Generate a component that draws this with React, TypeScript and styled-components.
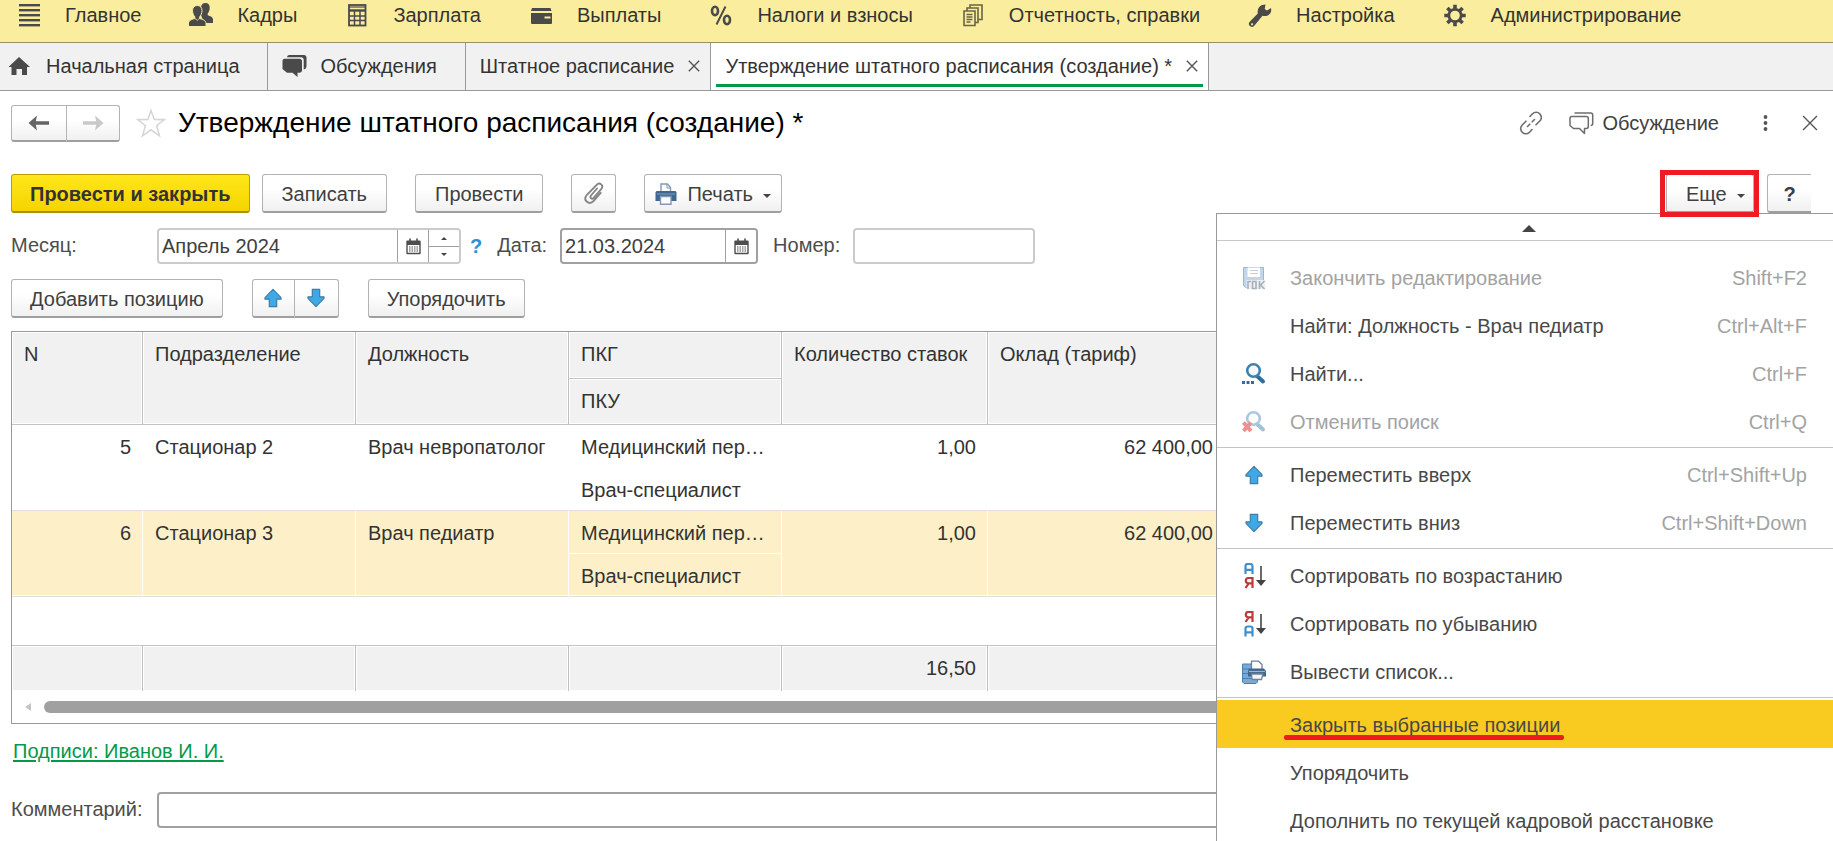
import React from "react";
import styled, { createGlobalStyle, css } from "styled-components";

const GlobalStyle = createGlobalStyle`
  *, *::before, *::after { box-sizing: border-box; }
  body { margin: 0; background: #fff; }
  body, button, input { font: 20px/24px "Liberation Sans", Arial, sans-serif; color: #404040; }
  button { cursor: pointer; margin: 0; }
  svg { display: block; flex: none; }
`;

const Shell = styled.div`
  min-height: 100vh;
  overflow: hidden;
  position: relative;
`;

/* ---------- sections bar ---------- */

const Sections = styled.nav`
  display: flex;
  align-items: center;
  gap: 48px;
  height: 43px;
  padding: 0 17px 13px;
  background: #fbed9e;
  border-bottom: 1px solid #9a8f62;
`;

const SectionLink = styled.a`
  display: flex;
  align-items: center;
  gap: 24px;
  color: #333;
  text-decoration: none;
  white-space: nowrap;
`;

/* ---------- open pages ---------- */

const Tabs = styled.div`
  display: flex;
  height: 48px;
  background: #f1f1f1;
  border-bottom: 1px solid #999;
`;

const Tab = styled.div<{ $active?: boolean }>`
  position: relative;
  display: flex;
  align-items: center;
  gap: 14px;
  padding: 0 10px 2px 14px;
  border-right: 1px solid #999;
  background: ${(p) => (p.$active ? "#fff" : "transparent")};
  ${(p) =>
    p.$active &&
    css`
      &::after {
        content: "";
        position: absolute;
        left: 5px;
        right: 5px;
        bottom: 3px;
        height: 3px;
        background: #009a4a;
      }
    `}
`;

const HomeTab = styled(Tab)`
  gap: 15px;
  padding: 0 27px 2px 7px;
`;

const TalkTab = styled(Tab)`
  padding-right: 28px;
`;

const BareButton = styled.button`
  display: flex;
  align-items: center;
  gap: 8px;
  padding: 0;
  border: 0;
  background: none;
  white-space: nowrap;
`;

const TabButton = styled(BareButton)`
  gap: inherit;
  color: #333;
`;

/* ---------- document header ---------- */

const Main = styled.main`
  padding: 0 22px 0 11px;
`;

const TitleRow = styled.header`
  display: flex;
  align-items: center;
  height: 64px;
  margin-bottom: 19px;
`;

const Title = styled.h1`
  flex: 1;
  margin: 0 0 0 12px;
  font-size: 28px;
  line-height: 32px;
  font-weight: 400;
  color: #000;
`;

const TitleTools = styled.div`
  display: flex;
  align-items: center;
  gap: 26px;
  margin-right: -7px;
`;

const WindowTools = styled.div`
  display: flex;
  align-items: center;
  gap: 34px;
  margin-left: 18px;
`;

/* ---------- buttons ---------- */

const Button = styled.button<{ $primary?: boolean; $snug?: boolean }>`
  display: flex;
  align-items: center;
  justify-content: center;
  gap: 10px;
  height: 39px;
  padding: 2px ${(p) => (p.$primary || p.$snug ? "18px" : "19px")} 0;
  border: 1px solid #b3b3b3;
  border-bottom: 2px solid #9f9f9f;
  border-radius: 3px;
  background: linear-gradient(#fff 40%, #f0f0f0);
  white-space: nowrap;
  ${(p) =>
    p.$primary &&
    css`
      border-color: #b8a000 #b8a000 #a89200;
      background: linear-gradient(#ffe61a, #f5d400);
      font-weight: 700;
      color: #333;
    `}
`;

const IconButton = styled(Button)`
  width: 45px;
  padding: 0;
`;

const HelpButton = styled(Button)`
  width: 44px;
  padding: 2px 0 0;
  border-right: 0;
  border-radius: 3px 0 0 3px;
  font-weight: 700;
`;

const Pair = styled.div<{ $nav?: boolean }>`
  display: flex;
  ${Button} {
    width: ${(p) => (p.$nav ? "53px" : "44px")};
    height: ${(p) => (p.$nav ? "37px" : "39px")};
    padding: 0;
  }
  ${Button}:first-child {
    width: ${(p) => (p.$nav ? "56px" : "43px")};
    border-radius: 3px 0 0 3px;
  }
  ${Button}:last-child {
    border-left: 0;
    border-radius: 0 3px 3px 0;
  }
`;

const StarButton = styled(BareButton)`
  margin-left: 16px;
`;

const Toolbar = styled.div`
  position: relative;
  display: flex;
  gap: 28px;
`;

const Group = styled.div`
  display: flex;
  gap: 12px;
`;

const EndGroup = styled(Group)`
  gap: 13px;
  margin-left: auto;
`;

const PrintButton = styled(Button)`
  padding: 2px 10px 0;
`;

const Caret = styled.span`
  padding-top: 3px;
`;

const MoreButton = styled(Button)`
  width: 88px;
  padding: 2px 10px 0 19px;
  justify-content: space-between;
`;

const Highlighted = styled.div`
  position: relative;
  z-index: 3;
  &::after {
    content: "";
    position: absolute;
    inset: -4px -5px -4px -6px;
    border: 5px solid #ed1c24;
    pointer-events: none;
  }
`;

/* ---------- form fields ---------- */

const Fields = styled.div`
  display: flex;
  align-items: center;
  margin: 15px 0;
`;

const Label = styled.label<{ $lead?: boolean }>`
  width: ${(p) => (p.$lead ? "146px" : "auto")};
  margin-right: ${(p) => (p.$lead ? "0" : "13px")};
  padding-bottom: 2px;
  flex: none;
  color: #4d4d4d;
`;

const Field = styled.div<{ $strong?: boolean; $grow?: boolean }>`
  display: flex;
  height: 36px;
  flex: ${(p) => (p.$grow ? "1" : "none")};
  border: 2px solid ${(p) => (p.$strong ? "#a0a0a0" : "#cbcbcb")};
  border-radius: 4px;
  background: #fff;
  overflow: hidden;
`;

const TextInput = styled.input<{ $w?: number }>`
  width: ${(p) => (p.$w ? p.$w + "px" : "100%")};
  min-width: 0;
  padding: 0 3px 1px;
  border: 0;
  outline: 0;
  background: transparent;
`;

const FieldButton = styled.button`
  display: flex;
  align-items: center;
  justify-content: center;
  width: 31px;
  padding: 0;
  border: 0;
  border-left: 1px solid #a0a0a0;
  background: #fff;
`;

const Spinner = styled.div`
  display: grid;
  grid-template-rows: 1fr 1fr;
  ${FieldButton} + ${FieldButton} {
    border-top: 1px solid #a0a0a0;
  }
`;

const Hint = styled(BareButton)`
  margin: 0 15px 0 9px;
  font-weight: 700;
  color: #2f8fd6;
`;

const NumberLabel = styled(Label)`
  margin-left: 15px;
`;

const Commands = styled.div`
  display: flex;
  gap: 29px;
  margin-bottom: 13px;
`;

/* ---------- positions table ---------- */

const Grid = styled.div`
  border: 1px solid #999;
  background: #fff;
`;

const Table = styled.table`
  width: 100%;
  table-layout: fixed;
  border-collapse: separate;
  border-spacing: 0;
  color: #333;
`;

const Row = styled.tr<{ $h: number }>`
  height: ${(p) => p.$h}px;
`;

const Th = styled.th`
  padding: 10px 11px 0 12px;
  border-right: 1px solid #bfbfbf;
  border-bottom: 1px solid #c4c4c4;
  background: #f1f1f1;
  box-shadow: inset 0 0 0 1px #fff;
  font-weight: 400;
  text-align: left;
  vertical-align: top;
  white-space: nowrap;
`;

const Td = styled.td<{ $num?: boolean; $on?: boolean; $last?: boolean }>`
  padding: 10px 11px 0 12px;
  vertical-align: top;
  white-space: nowrap;
  text-align: ${(p) => (p.$num ? "right" : "left")};
  border-right: 1px solid #fff;
  border-bottom: 1px solid ${(p) => (p.$last ? "#dedede" : "#fff")};
  background: ${(p) => (p.$on ? "#fdf0c8" : "#fff")};
  box-shadow: ${(p) => (p.$on && p.$last ? "inset 0 -1px 0 #fff" : "none")};
`;

const TotalCell = styled.td`
  padding: 10px 11px 0;
  border-right: 1px solid #bfbfbf;
  border-top: 1px solid #c4c4c4;
  background: #f1f1f1;
  box-shadow: inset 0 0 0 1px #fff;
  text-align: right;
  vertical-align: top;
`;

const ScrollRow = styled.div`
  display: flex;
  align-items: center;
  gap: 13px;
  height: 32px;
  padding: 0 13px;
`;

const ScrollThumb = styled.div`
  flex: 1;
  height: 12px;
  border-radius: 6px;
  background: #a0a0a0;
`;

const Signatures = styled.a`
  display: inline-block;
  margin: 15px 2px 29px;
  color: #009a4a;
  text-decoration-thickness: 2px;
  text-underline-offset: 2px;
`;

const CommentRow = styled.div`
  display: flex;
  align-items: center;
`;

/* ---------- drop-down menu ---------- */

const Menu = styled.div`
  position: absolute;
  z-index: 2;
  top: 100%;
  right: -22px;
  width: 617px;
  padding-bottom: 40px;
  border: 1px solid #999;
  border-right: 0;
  background: #fff;
`;

const MenuScroll = styled.button`
  display: flex;
  align-items: center;
  justify-content: center;
  width: 100%;
  height: 27px;
  margin-bottom: 12px;
  padding: 3px 0 0 8px;
  border: 0;
  border-bottom: 1px solid #c8c8c8;
  background: #fff;
`;

const MenuItem = styled.button<{ $on?: boolean }>`
  display: flex;
  align-items: center;
  width: 100%;
  height: 48px;
  padding: 1px 26px 0 25px;
  border: 0;
  background: ${(p) => (p.$on ? "#f9cb20" : "#fff")};
  color: #484848;
  text-align: left;
  &:disabled { color: #a3a3a3; }
`;

const MenuIcon = styled.span`
  display: flex;
  justify-content: center;
  flex: none;
  width: 24px;
  margin-right: 24px;
`;

const MenuText = styled.span<{ $marked?: boolean }>`
  position: relative;
  ${(p) =>
    p.$marked &&
    css`
      &::after {
        content: "";
        position: absolute;
        left: -6px;
        right: -4px;
        bottom: -3px;
        height: 5px;
        border-radius: 2px;
        background: #ed1c24;
      }
    `}
`;

const Shortcut = styled.kbd`
  margin-left: auto;
  font-family: inherit;
  color: #a3a3a3;
`;

const Separator = styled.hr`
  height: 1px;
  margin: 2px 0;
  border: 0;
  background: #c4c4c4;
`;

/* ---------- icons ---------- */

const G = "#4a4a4a";

const BarsIcon = () => (
  <svg width="24" height="24" viewBox="0 0 24 24" fill={G}>
    {[1, 6, 11, 16, 21].map((y) => <rect key={y} x="2" y={y} width="21" height="2.4" />)}
  </svg>
);
const PeopleIcon = () => (
  <svg width="24" height="24" viewBox="0 0 24 24" fill={G}>
    <path d="M16.500 0c2.800 0 4.200 2 4.200 4.600 0 2.800-.9 4.800-2 6v1.600c2.500.8 5.300 1.600 5.300 4.300V20h-9L12 12V4.600C12 2 13.700 0 16.500 0z" />
    <g stroke="#fbed9e" strokeWidth="1">
      <path d="M8.300 2.500c3 0 4.700 2.200 4.700 5 0 3-1.200 5-2.300 6.300v1.700c3.300.9 6.300 2 6.300 5v3H-.5v-3c0-3 3-4.100 6.300-5v-1.700C4.700 12.500 3.500 10.500 3.500 7.500c0-2.800 1.800-5 4.800-5z" />
    </g>
    <path d="M5.800 15.300l2.500 2 2.400-2" fill="none" stroke="#fbed9e" strokeWidth=".8" />
  </svg>
);
const CalcIcon = () => (
  <svg width="24" height="24" viewBox="0 0 24 24" fill="none" stroke={G}>
    <rect x="4" y="2" width="16.500" height="20.500" strokeWidth="1.800" />
    <path d="M4 4h16.500" strokeWidth="1.200" />
    <path d="M4 7.500h16" strokeWidth="2.400" />
    <path d="M4 13h16M4 17.500h16M9.500 8v14M15 8v14" strokeWidth="1.500" />
  </svg>
);
const WalletIcon = () => (
  <svg width="24" height="24" viewBox="0 0 24 24" fill={G}>
    <path d="M3 5h18.500l1 3H2z" />
    <path d="M2 10h21v10a1 1 0 0 1-1 1H3a1 1 0 0 1-1-1zM15.500 13.500v2h6v-2z" fillRule="evenodd" />
  </svg>
);
const PercentIcon = () => (
  <svg width="24" height="24" viewBox="0 0 24 24" fill="none" stroke={G}>
    <ellipse cx="6" cy="8" rx="3" ry="4.200" strokeWidth="2.600" />
    <ellipse cx="18" cy="17" rx="3" ry="4.200" strokeWidth="2.600" />
    <path d="M16.500 3.500L7.500 21.500" strokeWidth="2" />
  </svg>
);
const DocsIcon = () => (
  <svg width="24" height="24" viewBox="0 0 24 24" fill="none" stroke="#6a6446" strokeWidth="1.600">
    <path d="M3 8h11v14.500H3zM6 7.500V5h11v14.500h-2.500M9 4.500V2h12v14.500h-3.500" />
    <path d="M5.500 11.500h6M5.500 14h6M5.500 16.500h6M5.500 19h4" />
  </svg>
);
const WrenchIcon = () => (
  <svg width="24" height="24" viewBox="0 0 24 24">
    <path fill={G} fillRule="evenodd" d="M17.500 1.500l-.8 4.500 2.300 1.500L23 5c1 3.500-1 7.500-5 8-1.500.2-2.700 0-3.500-.2L6.500 22.500a3 3 0 0 1-5-3.500l8.300-8.500C9 6 11.500 1.500 17.500 1.500zM4 20.200a1 1 0 1 0 .1 0z" />
  </svg>
);
const GearIcon = () => (
  <svg width="24" height="24" viewBox="0 0 24 24" fill="none" stroke={G}>
    <circle cx="12" cy="12.500" r="6.200" strokeWidth="2.800" />
    <path strokeWidth="3.600" d="M12 1.800v4M12 19.200v4M1.300 12.500h4M18.700 12.500h4M4.400 4.900l2.800 2.800M16.800 17.300l2.800 2.800M4.400 20.100l2.800-2.800M16.800 7.700l2.800-2.800" />
  </svg>
);
const HomeIcon = () => (
  <svg width="24" height="20" viewBox="0 0 24 20">
    <path fill={G} d="M12 1L23 11h-3v8h-5v-6H9.500v6h-5v-8h-3z" />
  </svg>
);
const TalkIcon = () => (
  <svg width="25" height="24" viewBox="0 0 25 24" fill={G}>
    <path d="M5 3.300C5 2 6 1 7.300 1H22c1.500 0 2.500 1 2.500 2.500V12c0 2-1 3.200-2.800 3.500V6c0-1.700-1-2.700-2.700-2.700z" />
    <path d="M2.500 4.800h15c1.600 0 2.500.9 2.500 2.500v9c0 1.500-.9 2.400-2.500 2.400h-2V23l-5-4.300H5L.5 15V7.300C.5 5.700 1.200 4.800 2.500 4.800z" />
  </svg>
);
const TalkOutlineIcon = () => (
  <svg width="25" height="24" viewBox="0 0 25 24" fill="none" stroke="#6d6d6d" strokeWidth="1.500" strokeLinejoin="round">
    <path d="M5.500 2h16.200c1.300 0 2 .7 2 2v8.500c0 1.300-.7 2-2 2" />
    <path d="M2.800 5.500h14.600c1.200 0 1.900.7 1.900 1.900v8.200c0 1.200-.7 1.900-1.900 1.900H15.500v5l-5-5H4.500L1 14.500V7.400c0-1.200.6-1.900 1.800-1.900z" />
  </svg>
);
const CloseIcon = ({ size = 12 }: { size?: number }) => (
  <svg width={size} height={size} viewBox="0 0 12 12" stroke="#555" strokeWidth={size > 12 ? 1 : 1.4}>
    <path d="M.8.8l10.400 10.400M11.200.8L.8 11.200" />
  </svg>
);
const NavArrow = ({ forward }: { forward?: boolean }) => (
  <svg width="22" height="16" viewBox="0 0 22 16">
    <path
      fill={forward ? "#c9c9c9" : "#666"}
      d={forward ? "M21.500 8l-8.500 7.500 1.200-5.700H1V6.200h13.200L13 .5z" : "M.5 8L9 .5 7.800 6.200H21v3.600H7.800L9 15.500z"}
    />
  </svg>
);
const StarIcon = () => (
  <svg width="30" height="30" viewBox="0 0 31 30" fill="#fff" stroke="#d6d6d6" strokeWidth="1.600">
    <path d="M15.500 2l3.300 9.300 10.500.2-8 6.300 3 10.500-8.800-6.300-8.800 6.300 3-10.500-8-6.300 10.500-.2z" />
  </svg>
);
const LinkIcon = () => (
  <svg width="24" height="24" viewBox="0 0 24 24" fill="none" stroke="#6d6d6d" strokeWidth="1.600" strokeLinecap="round">
    <path d="M11 5.500l2.500-2.700a5 5 0 0 1 7.300 0 5 5 0 0 1 0 7.200L17 13.800M13 18.500l-2.500 2.700a5 5 0 0 1-7.300 0 5 5 0 0 1 0-7.200L7 10.200M8.500 15.500l2.300-2.300M13.200 10.800l2.300-2.300" />
  </svg>
);
const DotsIcon = () => (
  <svg width="5" height="18" viewBox="0 0 5 18" fill="#555">
    <circle cx="2.500" cy="3" r="1.900" /><circle cx="2.500" cy="9" r="1.900" /><circle cx="2.500" cy="15" r="1.900" />
  </svg>
);
const ClipIcon = () => (
  <svg width="22" height="24" viewBox="0 0 22 24" fill="none" stroke="#858585" strokeWidth="1.900" strokeLinecap="round">
    <path d="M14 7.500l-6 7c-1.700 2.300.9 4.300 2.700 2.300l7.500-8.600c3-3.900-1.500-7.600-4.800-4L3.700 14c-4.200 5.600 2.600 10.600 7 5.900l7-8" />
  </svg>
);
const PrinterIcon = () => (
  <svg width="22" height="22" viewBox="0 0 22 22">
    <path d="M6 8V1h6.500L15.500 4.500V8" fill="#fff" stroke="#8199b5" strokeWidth="1.400" />
    <path d="M12 1v4h3.500" fill="none" stroke="#8199b5" />
    <path d="M1.500 8h19l1 1.500V18H.5V9.500z" fill="#3f6791" />
    <path d="M2 11h18" stroke="#7f9fc0" />
    <path d="M5.500 13.500h10.500v7.800H5.500z" fill="#fff" stroke="#8199b5" strokeWidth="1.400" />
  </svg>
);
const CalendarIcon = () => (
  <svg width="15" height="17" viewBox="0 0 15 17">
    <path fill="#4d4d4d" fillRule="evenodd" d="M1.500 2.500h12c.8 0 1.200.5 1.200 1.200V15c0 .8-.5 1.300-1.200 1.300h-12C.8 16.300.3 15.800.3 15V3.700c0-.7.5-1.200 1.200-1.200zM1.700 7v7.800h11.600V7z" />
    <path d="M4 .5v3.500M11 .5v3.500" stroke="#4d4d4d" strokeWidth="1.600" />
    <path d="M3 9h9M3 11h9M3 13h9" stroke="#4d4d4d" strokeWidth="1.200" strokeDasharray="1.500 1" />
  </svg>
);
const MoveIcon = ({ down }: { down?: boolean }) => (
  <svg width="18" height="20" viewBox="0 0 18 20">
    <path
      transform={down ? "rotate(180 9 10)" : undefined}
      d="M9 1.300l8 8.400v1.500h-4.300v7.500H5.300v-7.500H1V9.700z"
      fill="#3fa9e8"
      stroke="#3d7ea6"
      strokeWidth="1.200"
      strokeLinejoin="round"
    />
  </svg>
);
const Triangle = ({ dir, w = 8, h = 4, fill = "#444" }: { dir: "up" | "down" | "left"; w?: number; h?: number; fill?: string }) => (
  <svg width={w} height={h} viewBox="0 0 10 10" preserveAspectRatio="none">
    <path fill={fill} d={{ up: "M0 10L5 0l5 10z", down: "M0 0h10L5 10z", left: "M10 0v10L0 5z" }[dir]} />
  </svg>
);
const SaveIcon = () => (
  <svg width="24" height="24" viewBox="0 0 24 24">
    <path d="M1.500 1.500h20v20H4l-2.500-2z" fill="#c3d5ea" stroke="#9fb4cf" />
    <path d="M5.500 1.500h12.500v9.500H5.500z" fill="#fff" />
    <path d="M8 4.500h8M8 7.500h8" stroke="#c3cfdd" />
    <path d="M4.500 14h19v9h-19z" fill="#eef1f4" />
    <path d="M6 15v8M6 15.500h3M10.500 15.500h3.500v7h-3.500zM17.500 15v8M22.500 15l-4 4 4 4" fill="none" stroke="#a9b0b8" strokeWidth="1.600" />
  </svg>
);
const FindIcon = () => (
  <svg width="24" height="24" viewBox="0 0 24 24" fill="none">
    <path d="M15 14l6 5.500" stroke="#2f6f9f" strokeWidth="4" strokeLinecap="round" />
    <circle cx="11.500" cy="8.500" r="6.300" stroke="#3d80b0" strokeWidth="2.600" fill="#f4faff" />
    <path d="M0 20.500h13" stroke="#2f6f9f" strokeWidth="3" strokeDasharray="3 1.500" />
  </svg>
);
const CancelFindIcon = () => (
  <svg width="24" height="24" viewBox="0 0 24 24" fill="none">
    <path d="M15 14l6 5.500" stroke="#a3c1d6" strokeWidth="4" strokeLinecap="round" />
    <circle cx="11.500" cy="8.500" r="6.300" stroke="#a9c8de" strokeWidth="2.600" />
    <path d="M1.500 12.500l7.500 8.500M9 12.500L1.500 21" stroke="#ee9090" strokeWidth="4" />
  </svg>
);
const LETTER_A = "M1 11V3.200C1 1.800 1.800 1 3.200 1h2.600C7.200 1 8 1.800 8 3.200V11M1 6.800h7";
const LETTER_YA = "M8 11V1H3.800C2.100 1 1.300 2 1.300 3.600s.8 2.700 2.500 2.700H8M4.200 6.300L1 11";
const SortIcon = ({ desc }: { desc?: boolean }) => (
  <svg width="24" height="26" viewBox="0 0 24 26" fill="none">
    <path d={LETTER_A} transform={desc ? "translate(2.500 14.500)" : "translate(2.500 0)"} stroke="#3f8fca" strokeWidth="2.200" />
    <path d={LETTER_YA} transform={desc ? "translate(2.500 0)" : "translate(2.500 14)"} stroke="#bb3a3a" strokeWidth="2.200" />
    <path d="M19 3v18" stroke="#444" strokeWidth="1.600" />
    <path d="M14 17h10l-5 6z" fill="#444" />
  </svg>
);
const PrintListIcon = () => (
  <svg width="24" height="24" viewBox="0 0 24 24">
    <path d="M.5 4h15v18l-1.500 1.500H2L.5 22z" fill="#7aa9d6" stroke="#4a7fb3" />
    <path d="M1 9h6M1 13.500h6M1 18.500h13" stroke="#4a7fb3" strokeWidth="1.200" />
    <path d="M9.500 9V1.200h7L20 4.500V9" fill="#fff" stroke="#6f8297" strokeWidth="1.300" />
    <path d="M7 8.500h15l2 2.500v5.500H6V11z" fill="#41658c" />
    <path d="M7 11.500h16" stroke="#9cb6cf" strokeWidth="1.200" />
    <path d="M9.500 14h11.500l-1.500 5.500h-9.500z" fill="#f3f5f7" stroke="#6f8297" strokeWidth="1.300" />
  </svg>
);

/* ---------- data ---------- */

const sections: [string, React.FC][] = [
  ["Главное", BarsIcon],
  ["Кадры", PeopleIcon],
  ["Зарплата", CalcIcon],
  ["Выплаты", WalletIcon],
  ["Налоги и взносы", PercentIcon],
  ["Отчетность, справки", DocsIcon],
  ["Настройка", WrenchIcon],
  ["Администрирование", GearIcon],
];

const positions = [
  { n: 5, unit: "Стационар 2", post: "Врач невропатолог", group: "Медицинский пер…", level: "Врач-специалист", count: "1,00", pay: "62\u00a0400,00" },
  { n: 6, unit: "Стационар 3", post: "Врач педиатр", group: "Медицинский пер…", level: "Врач-специалист", count: "1,00", pay: "62\u00a0400,00" },
];

type Entry = { text: string; keys?: string; icon?: React.ReactNode; off?: boolean; on?: boolean };

const menu: Entry[][] = [
  [
    { text: "Закончить редактирование", keys: "Shift+F2", icon: <SaveIcon />, off: true },
    { text: "Найти: Должность - Врач педиатр", keys: "Ctrl+Alt+F" },
    { text: "Найти...", keys: "Ctrl+F", icon: <FindIcon /> },
    { text: "Отменить поиск", keys: "Ctrl+Q", icon: <CancelFindIcon />, off: true },
  ],
  [
    { text: "Переместить вверх", keys: "Ctrl+Shift+Up", icon: <MoveIcon /> },
    { text: "Переместить вниз", keys: "Ctrl+Shift+Down", icon: <MoveIcon down /> },
  ],
  [
    { text: "Сортировать по возрастанию", icon: <SortIcon /> },
    { text: "Сортировать по убыванию", icon: <SortIcon desc /> },
    { text: "Вывести список...", icon: <PrintListIcon /> },
  ],
  [
    { text: "Закрыть выбранные позиции", on: true },
    { text: "Упорядочить" },
    { text: "Дополнить по текущей кадровой расстановке" },
  ],
];

const MoreMenu = () => (
  <Menu role="menu">
    <MenuScroll aria-label="Прокрутить вверх"><Triangle dir="up" w={14} h={7} /></MenuScroll>
    {menu.map((group, i) => (
      <React.Fragment key={i}>
        {i > 0 && <Separator />}
        {group.map((e) => (
          <MenuItem key={e.text} role="menuitem" disabled={e.off} $on={e.on}>
            <MenuIcon>{e.icon}</MenuIcon>
            <MenuText $marked={e.on}>{e.text}</MenuText>
            {e.keys && <Shortcut>{e.keys}</Shortcut>}
          </MenuItem>
        ))}
      </React.Fragment>
    ))}
  </Menu>
);

const PositionsTable = () => (
  <Grid>
    <Table>
      <colgroup>
        {[131, 213, 213, 213, 206, 237].map((w, i) => <col key={i} width={w} />)}
        <col />
      </colgroup>
      <thead>
        <Row $h={47}>
          <Th rowSpan={2}>N</Th>
          <Th rowSpan={2}>Подразделение</Th>
          <Th rowSpan={2}>Должность</Th>
          <Th>ПКГ</Th>
          <Th rowSpan={2}>Количество ставок</Th>
          <Th rowSpan={2}>Оклад (тариф)</Th>
          <Th rowSpan={2} />
        </Row>
        <Row $h={46}><Th>ПКУ</Th></Row>
      </thead>
      <tbody>
        {positions.map((p, i) => {
          const on = i === 1;
          return (
            <React.Fragment key={p.n}>
              <Row $h={43}>
                <Td rowSpan={2} $num $on={on} $last>{p.n}</Td>
                <Td rowSpan={2} $on={on} $last>{p.unit}</Td>
                <Td rowSpan={2} $on={on} $last>{p.post}</Td>
                <Td $on={on}>{p.group}</Td>
                <Td rowSpan={2} $num $on={on} $last>{p.count}</Td>
                <Td rowSpan={2} $num $on={on} $last>{p.pay}</Td>
                <Td rowSpan={2} $on={on} $last />
              </Row>
              <Row $h={43}><Td $on={on} $last>{p.level}</Td></Row>
            </React.Fragment>
          );
        })}
        <Row $h={48}><Td colSpan={7} /></Row>
      </tbody>
      <tfoot>
        <Row $h={46}>
          <TotalCell /><TotalCell /><TotalCell /><TotalCell />
          <TotalCell>16,50</TotalCell>
          <TotalCell /><TotalCell />
        </Row>
      </tfoot>
    </Table>
    <ScrollRow>
      <Triangle dir="left" w={6} h={8} fill="#c4c4c4" />
      <ScrollThumb />
    </ScrollRow>
  </Grid>
);

export default function App() {
  return (
    <Shell>
      <GlobalStyle />
      <Sections>
        {sections.map(([name, Icon]) => (
          <SectionLink key={name} href="#"><Icon />{name}</SectionLink>
        ))}
      </Sections>

      <Tabs>
        <HomeTab><TabButton><HomeIcon />Начальная страница</TabButton></HomeTab>
        <TalkTab><TabButton><TalkIcon />Обсуждения</TabButton></TalkTab>
        <Tab>
          <TabButton>Штатное расписание</TabButton>
          <BareButton aria-label="Закрыть"><CloseIcon /></BareButton>
        </Tab>
        <Tab $active>
          <TabButton>Утверждение штатного расписания (создание) *</TabButton>
          <BareButton aria-label="Закрыть"><CloseIcon /></BareButton>
        </Tab>
      </Tabs>

      <Main>
        <TitleRow>
          <Pair $nav>
            <Button aria-label="Назад"><NavArrow /></Button>
            <Button aria-label="Вперед"><NavArrow forward /></Button>
          </Pair>
          <StarButton aria-label="В избранное"><StarIcon /></StarButton>
          <Title>Утверждение штатного расписания (создание) *</Title>
          <TitleTools>
            <BareButton aria-label="Ссылка"><LinkIcon /></BareButton>
            <BareButton><TalkOutlineIcon />Обсуждение</BareButton>
            <WindowTools>
              <BareButton aria-label="Действия"><DotsIcon /></BareButton>
              <BareButton aria-label="Закрыть"><CloseIcon size={16} /></BareButton>
            </WindowTools>
          </TitleTools>
        </TitleRow>

        <Toolbar>
          <Group>
            <Button $primary>Провести и закрыть</Button>
            <Button>Записать</Button>
          </Group>
          <Button>Провести</Button>
          <IconButton aria-label="Файлы"><ClipIcon /></IconButton>
          <PrintButton><PrinterIcon />Печать<Caret><Triangle dir="down" /></Caret></PrintButton>
          <EndGroup>
            <Highlighted><MoreButton>Еще<Caret><Triangle dir="down" /></Caret></MoreButton></Highlighted>
            <HelpButton>?</HelpButton>
          </EndGroup>
          <MoreMenu />
        </Toolbar>

        <Fields>
          <Label $lead htmlFor="month">Месяц:</Label>
          <Field>
            <TextInput id="month" $w={238} defaultValue="Апрель 2024" />
            <FieldButton aria-label="Выбрать месяц"><CalendarIcon /></FieldButton>
            <Spinner>
              <FieldButton aria-label="Следующий"><Triangle dir="up" w={6} h={3} /></FieldButton>
              <FieldButton aria-label="Предыдущий"><Triangle dir="down" w={6} h={3} /></FieldButton>
            </Spinner>
          </Field>
          <Hint>?</Hint>
          <Label htmlFor="date">Дата:</Label>
          <Field $strong>
            <TextInput id="date" $w={163} defaultValue="21.03.2024" />
            <FieldButton aria-label="Выбрать дату"><CalendarIcon /></FieldButton>
          </Field>
          <NumberLabel htmlFor="number">Номер:</NumberLabel>
          <Field><TextInput id="number" $w={178} /></Field>
        </Fields>

        <Commands>
          <Button $snug>Добавить позицию</Button>
          <Pair>
            <Button aria-label="Вверх"><MoveIcon /></Button>
            <Button aria-label="Вниз"><MoveIcon down /></Button>
          </Pair>
          <Button $snug>Упорядочить</Button>
        </Commands>

        <PositionsTable />

        <Signatures href="#">Подписи: Иванов И. И.</Signatures>

        <CommentRow>
          <Label $lead htmlFor="comment">Комментарий:</Label>
          <Field $strong $grow><TextInput id="comment" /></Field>
        </CommentRow>
      </Main>
    </Shell>
  );
}
